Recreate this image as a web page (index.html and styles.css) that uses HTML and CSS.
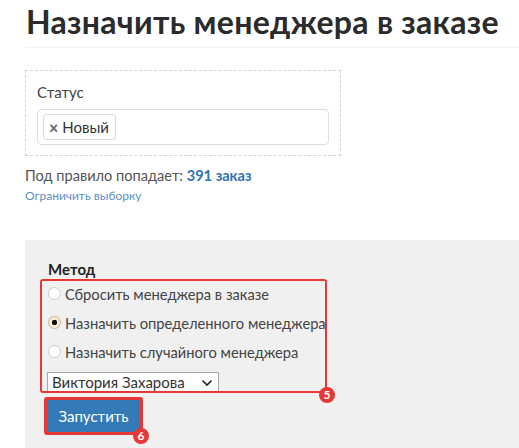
FILE: index.html
```html
<!DOCTYPE html>
<html lang="ru">
<head>
<meta charset="utf-8">
<link rel="stylesheet" href="styles.css">
</head>
<body>
<div class="page">
  <h1 class="title">Назначить менеджера в заказе</h1>
  <div class="filter">
    <div class="label">Статус</div>
    <div class="input">
      <span class="tag"><span class="tag-x">×</span>Новый</span>
    </div>
  </div>
  <div class="rule">Под правило попадает: <b class="count">391 заказ</b></div>
  <a class="limit">Ограничить выборку</a>
  <div class="panel">
    <div class="method-title">Метод</div>
    <div class="method">
      <label class="opt"><span class="radio"></span>Сбросить менеджера в заказе</label>
      <label class="opt"><span class="radio checked"></span>Назначить определенного менеджера</label>
      <label class="opt"><span class="radio"></span>Назначить случайного менеджера</label>
      <div class="select">Виктория Захарова
        <svg class="chev" width="12" height="8" viewBox="0 0 12 8"><path d="M1.5 1.5 L6 6 L10.5 1.5" fill="none" stroke="#222" stroke-width="1.6"/></svg>
      </div>
      <span class="mark mark-box"></span>
      <span class="badge badge-5">5</span>
    </div>
    <div class="run-wrap">
      <button class="run">Запустить</button>
      <span class="badge badge-6">6</span>
    </div>
  </div>
</div>
</body>
</html>
```
FILE: styles.css
```css
html, body {
  margin: 0;
  padding: 0;
  background: #fff;
}
body {
  font-family: Lato, "Liberation Sans", sans-serif;
  color: #333;
}
.page {
  padding-left: 25px;
  width: 494px;
  height: 448px;
  overflow: hidden;
}
.title {
  margin: 0;
  padding: 3px 0 6px 1px;
  font-size: 32px;
  line-height: 38px;
  font-weight: 700;
  color: #2b2b2b;
  letter-spacing: 0.3px;
  border-bottom: 1px solid #f1f1f1;
  white-space: nowrap;
}
.filter {
  margin-top: 22px;
  width: 292px;
  height: 73px;
  border: 1px dashed #d4d4d4;
  padding: 11px 11px 0 11px;
  box-sizing: content-box;
}
.label {
  font-size: 15px;
  line-height: 20px;
  color: #444;
  margin-bottom: 7px;
}
.input {
  border: 1px solid #dedede;
  border-radius: 4px;
  padding: 5px 5px;
  box-sizing: border-box;
  height: 36px;
  display: flex;
  align-items: center;
}
.tag {
  display: inline-flex;
  align-items: center;
  height: 24px;
  padding: 0 6px 0 5px;
  border: 1px solid #dcdcdc;
  border-radius: 3px;
  font-size: 15px;
  color: #333;
  background: #fff;
}
.tag-x {
  font-size: 16px;
  font-weight: 900;
  color: #666;
  margin-right: 4px;
}
.rule {
  margin-top: 10px;
  font-size: 14.6px;
  line-height: 20px;
  color: #555;
}
.count {
  color: #2f74b5;
  font-weight: 700;
}
.limit {
  display: block;
  margin-top: 1px;
  font-size: 12px;
  line-height: 18px;
  color: #5b8fc7;
}
.panel {
  margin-top: 35px;
  background: #f0f0f0;
  height: 220px;
  padding: 19px 0 0 23px;
}
.method-title {
  font-size: 15px;
  font-weight: 700;
  line-height: 20px;
  color: #222;
}
.method {
  position: relative;
  width: 280px;
  padding: 0;
}
.opt {
  display: flex;
  align-items: center;
  height: 29px;
  font-size: 14.7px;
  color: #444;
  white-space: nowrap;
}
.radio {
  width: 13px;
  height: 13px;
  border-radius: 50%;
  border: 1px solid #ccc;
  background: #fff;
  margin-right: 4px;
  box-sizing: border-box;
  flex: none;
}
.radio.checked {
  background: radial-gradient(circle, #111 0 2.5px, #f7ebcf 3px);
  border-color: #c9b98f;
}
.select {
  margin-top: 6px;
  margin-left: -1px;
  width: 172px;
  height: 20px;
  box-sizing: border-box;
  border: 1px solid #a9a9a9;
  background: #fff;
  font-size: 15px;
  line-height: 18px;
  padding-left: 4px;
  color: #333;
  position: relative;
}
.chev {
  position: absolute;
  right: 5px;
  top: 6px;
}
.mark-box {
  position: absolute;
  left: -8px;
  top: 0;
  width: 287px;
  height: 114px;
  border: 2.5px solid #e53935;
  border-radius: 3px;
  box-sizing: border-box;
}
.badge {
  position: absolute;
  width: 16px;
  height: 16px;
  border-radius: 50%;
  background: #e53935;
  color: #fff;
  font-size: 12px;
  font-weight: 700;
  line-height: 16px;
  text-align: center;
}
.badge-5 {
  left: 271px;
  top: 108px;
}
.run-wrap {
  position: relative;
  margin-top: 5px;
  margin-left: -4px;
  width: 99px;
}
.run {
  display: block;
  width: 99px;
  height: 38px;
  background: #337ab7;
  color: #fff;
  font-family: Lato, "Liberation Sans", sans-serif;
  font-size: 15px;
  border: 3px solid #e53935;
  border-radius: 3px;
  padding: 0;
}
.badge-6 {
  left: 89px;
  top: 31px;
}
```
